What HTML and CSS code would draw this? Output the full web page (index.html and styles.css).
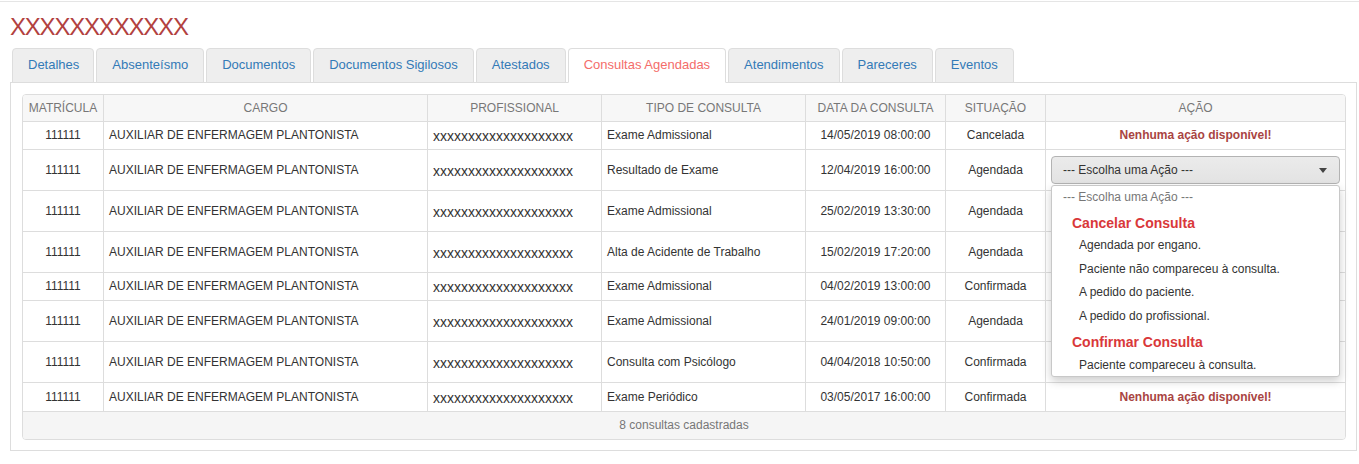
FILE: index.html
```html
<!DOCTYPE html>
<html lang="pt-BR">
<head>
<meta charset="utf-8">
<title>Consultas Agendadas</title>
<link rel="stylesheet" href="styles.css">
</head>
<body>
<div class="topbar"></div>
<h1 class="title">XXXXXXXXXXXX</h1>
<div class="main">
  <ul class="tabs">
    <li class="tab">Detalhes</li>
    <li class="tab">Absenteísmo</li>
    <li class="tab">Documentos</li>
    <li class="tab">Documentos Sigilosos</li>
    <li class="tab">Atestados</li>
    <li class="tab active">Consultas Agendadas</li>
    <li class="tab">Atendimentos</li>
    <li class="tab">Pareceres</li>
    <li class="tab">Eventos</li>
  </ul>
  <div class="panel">
    <div class="grid">
      <table class="consultas">
        <thead>
          <tr>
            <th class="c-mat">MATRÍCULA</th>
            <th class="c-cargo">CARGO</th>
            <th class="c-prof">PROFISSIONAL</th>
            <th class="c-tipo">TIPO DE CONSULTA</th>
            <th class="c-data">DATA DA CONSULTA</th>
            <th class="c-sit">SITUAÇÃO</th>
            <th class="c-acao">AÇÃO</th>
          </tr>
        </thead>
        <tbody>
          <tr class="short">
            <td class="center">111111</td>
            <td>AUXILIAR DE ENFERMAGEM PLANTONISTA</td>
            <td class="xs">xxxxxxxxxxxxxxxxxxxx</td>
            <td>Exame Admissional</td>
            <td class="center">14/05/2019 08:00:00</td>
            <td class="center">Cancelada</td>
            <td class="center"><span class="none">Nenhuma ação disponível!</span></td>
          </tr>
          <tr class="tall">
            <td class="center">111111</td>
            <td>AUXILIAR DE ENFERMAGEM PLANTONISTA</td>
            <td class="xs">xxxxxxxxxxxxxxxxxxxx</td>
            <td>Resultado de Exame</td>
            <td class="center">12/04/2019 16:00:00</td>
            <td class="center">Agendada</td>
            <td>
              <div class="select open">
                <span>--- Escolha uma Ação ---</span>
                <span class="caret"></span>
                <ul class="dropdown">
                  <li class="placeholder">--- Escolha uma Ação ---</li>
                  <li class="group">Cancelar Consulta</li>
                  <li class="opt">Agendada por engano.</li>
                  <li class="opt">Paciente não compareceu à consulta.</li>
                  <li class="opt">A pedido do paciente.</li>
                  <li class="opt">A pedido do profissional.</li>
                  <li class="group group2">Confirmar Consulta</li>
                  <li class="opt opt-last">Paciente compareceu à consulta.</li>
                </ul>
              </div>
            </td>
          </tr>
          <tr class="tall">
            <td class="center">111111</td>
            <td>AUXILIAR DE ENFERMAGEM PLANTONISTA</td>
            <td class="xs">xxxxxxxxxxxxxxxxxxxx</td>
            <td>Exame Admissional</td>
            <td class="center">25/02/2019 13:30:00</td>
            <td class="center">Agendada</td>
            <td><div class="select"><span class="caret"></span></div></td>
          </tr>
          <tr class="tall">
            <td class="center">111111</td>
            <td>AUXILIAR DE ENFERMAGEM PLANTONISTA</td>
            <td class="xs">xxxxxxxxxxxxxxxxxxxx</td>
            <td>Alta de Acidente de Trabalho</td>
            <td class="center">15/02/2019 17:20:00</td>
            <td class="center">Agendada</td>
            <td><div class="select"><span class="caret"></span></div></td>
          </tr>
          <tr class="short">
            <td class="center">111111</td>
            <td>AUXILIAR DE ENFERMAGEM PLANTONISTA</td>
            <td class="xs">xxxxxxxxxxxxxxxxxxxx</td>
            <td>Exame Admissional</td>
            <td class="center">04/02/2019 13:00:00</td>
            <td class="center">Confirmada</td>
            <td class="center"></td>
          </tr>
          <tr class="tall">
            <td class="center">111111</td>
            <td>AUXILIAR DE ENFERMAGEM PLANTONISTA</td>
            <td class="xs">xxxxxxxxxxxxxxxxxxxx</td>
            <td>Exame Admissional</td>
            <td class="center">24/01/2019 09:00:00</td>
            <td class="center">Agendada</td>
            <td><div class="select"><span class="caret"></span></div></td>
          </tr>
          <tr class="tall">
            <td class="center">111111</td>
            <td>AUXILIAR DE ENFERMAGEM PLANTONISTA</td>
            <td class="xs">xxxxxxxxxxxxxxxxxxxx</td>
            <td>Consulta com Psicólogo</td>
            <td class="center">04/04/2018 10:50:00</td>
            <td class="center">Confirmada</td>
            <td><div class="select"><span class="caret"></span></div></td>
          </tr>
          <tr class="last">
            <td class="center">111111</td>
            <td>AUXILIAR DE ENFERMAGEM PLANTONISTA</td>
            <td class="xs">xxxxxxxxxxxxxxxxxxxx</td>
            <td>Exame Periódico</td>
            <td class="center">03/05/2017 16:00:00</td>
            <td class="center">Confirmada</td>
            <td class="center"><span class="none">Nenhuma ação disponível!</span></td>
          </tr>
        </tbody>
        <tfoot>
          <tr>
            <td class="footer" colspan="7">8 consultas cadastradas</td>
          </tr>
        </tfoot>
      </table>
    </div>
  </div>
</div>
</body>
</html>
```

FILE: styles.css
```css
* {
  box-sizing: border-box;
}

html, body {
  margin: 0;
  padding: 0;
  background: #fff;
}

body {
  font-family: "Liberation Sans", Arial, sans-serif;
  font-size: 12px;
  color: #333;
}

.topbar {
  height: 2px;
  border-bottom: 1px solid #e5e5e5;
}

.title {
  margin: 11px 0 0 10px;
  font-size: 24px;
  line-height: 27px;
  font-weight: normal;
  letter-spacing: -1.2px;
  color: #b2413f;
}

.main {
  margin: 8px 2px 0 10px;
}

.tabs {
  display: flex;
  list-style: none;
  margin: 0;
  padding: 0 0 0 2px;
  position: relative;
  z-index: 1;
}

.tab {
  margin-right: 2px;
  padding: 7px 15px 9px;
  font-size: 13px;
  line-height: 17px;
  color: #337ab7;
  background: #eee;
  border: 1px solid #ddd;
  border-radius: 4px 4px 0 0;
}

.tab:first-child {
  padding-right: 14px;
}

.tab.active {
  background: #fff;
  color: #f46d6a;
  border-bottom-color: #fff;
}

.panel {
  margin-top: -1px;
  border: 1px solid #ddd;
  padding: 11px 10px 10px 11px;
}

.grid {
  border: 1px solid #ddd;
  border-radius: 4px;
}

.consultas {
  width: 100%;
  border-collapse: separate;
  border-spacing: 0;
  table-layout: fixed;
}

.consultas th {
  height: 26px;
  padding: 0 5px;
  background: #f7f7f7;
  color: #777;
  font-weight: normal;
  text-align: center;
  white-space: nowrap;
  border-left: 1px solid #ddd;
}

.consultas th:first-child {
  border-left: none;
  border-top-left-radius: 3px;
}

.consultas th:last-child {
  border-top-right-radius: 3px;
}

.c-mat { width: 80px; }
.c-cargo { width: 324px; }
.c-prof { width: 174px; }
.c-tipo { width: 204px; }
.c-data { width: 140px; }
.c-sit { width: 100px; }
.c-acao { width: 300px; }

.consultas td {
  padding: 0 5px;
  line-height: 17px;
  vertical-align: middle;
  white-space: nowrap;
  border-top: 1px solid #ddd;
  border-left: 1px solid #ddd;
}

.consultas td:first-child {
  border-left: none;
}

.short td { height: 28px; }
.tall td { height: 41px; }
.last td { height: 29px; }

.center {
  text-align: center;
}

.xs {
  font-size: 14px;
  padding-top: 2px !important;
}

.none {
  font-weight: bold;
  color: #a94442;
}

.select {
  position: relative;
  display: flex;
  align-items: center;
  justify-content: space-between;
  height: 28px;
  padding: 0 12px 0 11px;
  background: linear-gradient(#ebebeb, #e3e3e3);
  border: 1px solid #b3b3b3;
  border-radius: 4px;
  color: #333;
}

.select .caret {
  margin-left: auto;
}

.caret {
  width: 0;
  height: 0;
  border-left: 4px solid transparent;
  border-right: 4px solid transparent;
  border-top: 5px solid #444;
}

.dropdown {
  position: absolute;
  top: calc(100% + 2px);
  left: -1px;
  right: -1px;
  z-index: 5;
  list-style: none;
  margin: 0;
  padding: 0;
  background: #fff;
  border: 1px solid #c8c8c8;
  border-radius: 3px;
  box-shadow: 0 4px 10px rgba(0, 0, 0, 0.2);
}

.dropdown .placeholder {
  height: 22px;
  line-height: 22px;
  padding-left: 11px;
  color: #777;
}

.dropdown .group {
  height: 26px;
  line-height: 30px;
  padding-left: 20px;
  font-size: 14px;
  font-weight: bold;
  color: #d9383a;
}

.dropdown .group2 {
  height: 25px;
  line-height: 28px;
}

.dropdown .opt {
  height: 23.5px;
  line-height: 23.5px;
  padding-left: 27px;
  color: #333;
}

.dropdown .opt-last {
  height: 23px;
  line-height: 24px;
}

.consultas td.footer {
  height: 28px;
  background: #f5f5f5;
  color: #777;
  text-align: center;
  border-left: none;
  border-radius: 0 0 3px 3px;
}
```
